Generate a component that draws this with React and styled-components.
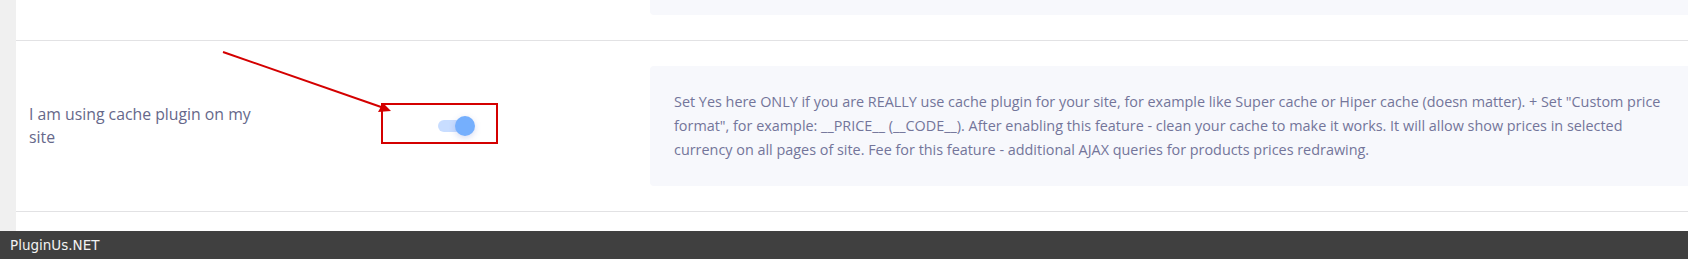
import React from 'react';
import styled, { createGlobalStyle } from 'styled-components';

const GlobalStyle = createGlobalStyle`
	body {
		margin: 0;
		background: #fff;
		font-family: 'Open Sans', 'Lato', sans-serif;
	}
`;

const description = [
	'Set Yes here ONLY if you are REALLY use cache plugin for your site, for example like Super cache or Hiper cache (doesn matter). + Set "Custom price',
	'format", for example: __PRICE__ (__CODE__). After enabling this feature - clean your cache to make it works. It will allow show prices in selected',
	'currency on all pages of site. Fee for this feature - additional AJAX queries for products prices redrawing.',
];

function Toggle({ on }) {
	return (
		<Track on={on}>
			<Knob on={on} />
		</Track>
	);
}

function Annotation() {
	return (
		<Overlay>
			<Arrow width='420' height='120' viewBox='0 0 420 120'>
				<line x1='223' y1='11' x2='384' y2='67' stroke='#d40000' strokeWidth='2' />
				<polygon points='391,70 378,71 383,62' fill='#d40000' />
			</Arrow>
			<Highlight />
		</Overlay>
	);
}

export default function App() {
	return (
		<>
			<GlobalStyle />
			<Page>
				<Main>
					<Sidebar />
					<Content>
						<Row partial>
							<span />
							<span />
							<DescBox partial />
						</Row>
						<Row>
							<Label>I am using cache plugin on my site</Label>
							<Control>
								<Toggle on />
							</Control>
							<DescBox>
								{description.map((line) => (
									<Line key={line}>{line}</Line>
								))}
							</DescBox>
							<Annotation />
						</Row>
						<Spacer />
					</Content>
				</Main>
				<Footer>PluginUs.NET</Footer>
			</Page>
		</>
	);
}

const Page = styled.div`
	width: 1688px;
	height: 259px;
	overflow: hidden;
`;

const Main = styled.div`
	display: flex;
`;

const Sidebar = styled.div`
	width: 16px;
	flex-shrink: 0;
	background: #f0f0f0;
`;

const Content = styled.div`
	flex: 1;
	min-width: 0;
`;

const Row = styled.div`
	position: relative;
	display: grid;
	grid-template-columns: 422px 212px 1fr;
	align-items: center;
	padding: ${(p) => (p.partial ? '0 0 25px' : '25px 0')};
	border-bottom: 1px solid #e2e2e4;
`;

const Label = styled.div`
	padding-left: 13px;
	max-width: 232px;
	font-size: 15.8px;
	line-height: 23px;
	color: #66688a;
`;

const Control = styled.div`
	display: flex;
	align-items: center;
`;

const Track = styled.div`
	position: relative;
	width: 34px;
	height: 12px;
	border-radius: 6px;
	background: ${(p) => (p.on ? '#c8ddff' : '#dfe1e8')};
`;

const Knob = styled.div`
	position: absolute;
	top: -4px;
	left: ${(p) => (p.on ? '17px' : '-3px')};
	width: 20px;
	height: 20px;
	border-radius: 50%;
	background: ${(p) => (p.on ? '#75affd' : '#fff')};
	box-shadow: 0 2px 6px rgba(90, 110, 200, 0.25);
`;

const DescBox = styled.div`
	background: #f7f8fc;
	border-radius: ${(p) => (p.partial ? '0 0 4px 4px' : '4px')};
	height: ${(p) => (p.partial ? '15px' : 'auto')};
	padding: ${(p) => (p.partial ? '0' : '24px')};
	font-size: 14.4px;
	line-height: 24px;
	color: #73759a;
	margin-right: -20px;
`;

const Line = styled.span`
	display: block;
	white-space: nowrap;
`;

const Spacer = styled.div`
	height: 19px;
`;

const Overlay = styled.div`
	position: absolute;
	inset: 0;
	pointer-events: none;
`;

const Arrow = styled.svg`
	position: absolute;
	left: -16px;
	top: 0;
`;

const Highlight = styled.div`
	position: absolute;
	left: 365px;
	top: 62px;
	width: 117px;
	height: 41px;
	box-sizing: border-box;
	border: 2px solid #d40000;
`;

const Footer = styled.div`
	height: 28px;
	background: #404040;
	color: #f2f2f2;
	font-family: 'DejaVu Sans', sans-serif;
	font-size: 13.5px;
	line-height: 28px;
	padding-left: 10px;
`;
